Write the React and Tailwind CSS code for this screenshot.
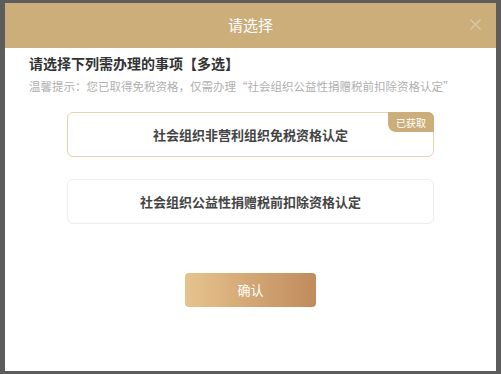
const font = { fontFamily: '"Noto Sans CJK SC", "Noto Sans", sans-serif' };

const App = () => {
  return (
    <div className="w-[501px] h-[374px] bg-[#5c5c5c] pt-[3px] pl-[5px] overflow-hidden" style={font}>
      <div className="w-[491px] h-[368px] bg-white flex flex-col">
        <div className="h-[45px] bg-[#cbae7a] relative flex items-center justify-center">
          <span className="text-white text-[15px]">请选择</span>
          <span className="absolute right-[12px] top-[12px] text-[#dccaa6] text-[17px] leading-none">×</span>
        </div>

        <div className="px-[24px] pt-[4px]">
          <h2 className="text-[14px] font-bold text-[#333] leading-[22px]">请选择下列需办理的事项【多选】</h2>
          <p className="text-[11.5px] text-[#b0b0b0] mt-[3px] leading-[18px] whitespace-nowrap">
            温馨提示：您已取得免税资格，仅需办理“社会组织公益性捐赠税前扣除资格认定”
          </p>
        </div>

        <div className="flex flex-col items-center gap-[22px] mt-[17px]">
          <div className="relative w-[367px] h-[45px] border border-[#e6d3ae] rounded-[6px] flex items-center justify-center">
            <span className="text-[13px] font-bold text-[#444]">社会组织非营利组织免税资格认定</span>
            <span className="absolute -top-px -right-px w-[46px] h-[20px] bg-[#cbae7a] text-white text-[10px] rounded-tr-[6px] rounded-bl-[8px] flex items-center justify-center">已获取</span>
          </div>
          <div className="w-[367px] h-[45px] border border-[#eeeeee] rounded-[6px] flex items-center justify-center">
            <span className="text-[13px] font-bold text-[#444]">社会组织公益性捐赠税前扣除资格认定</span>
          </div>
        </div>

        <div className="flex justify-center mt-[49px]">
          <button className="w-[131px] h-[34px] rounded-[4px] bg-gradient-to-r from-[#e6c48d] to-[#c08b5d] text-white text-[13px]">
            确认
          </button>
        </div>
      </div>
    </div>
  );
};

export default App;
